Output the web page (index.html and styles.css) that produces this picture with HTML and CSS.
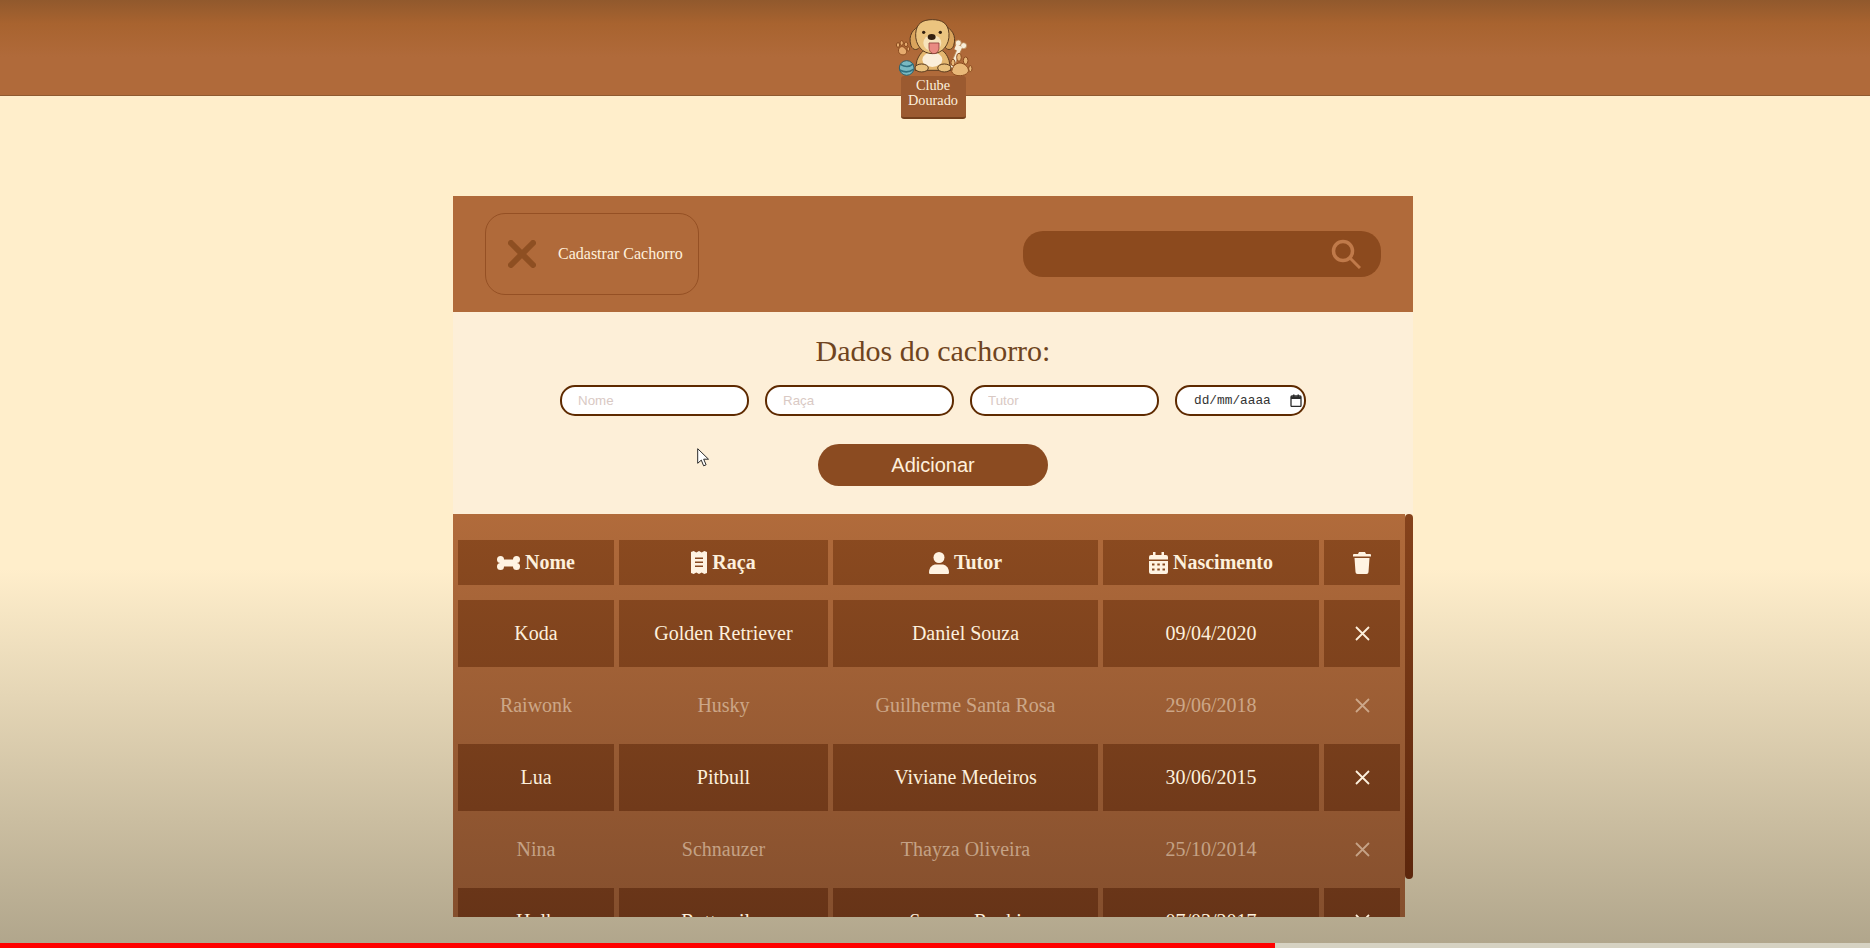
FILE: index.html
```html
<!DOCTYPE html>
<html lang="pt-BR">
<head>
<meta charset="UTF-8" />
<meta name="viewport" content="width=device-width, initial-scale=1" />
<title>Clube Dourado</title>
<link rel="stylesheet" href="styles.css">
</head>
<body>
  <header class="top-header">
    <div class="logo">
      <svg class="logo-art" viewBox="0 0 240 190" width="80" height="63.3">
        <!-- patinha pequena -->
        <g fill="#e6ab6e" stroke="#8a4a1e" stroke-width="3">
          <path d="M18 108c-6-14 6-22 13-18s13 12 8 20c-4 5-16 5-21-2z"/>
          <ellipse cx="15" cy="84" rx="5" ry="7"/>
          <ellipse cx="26" cy="78" rx="5" ry="7"/>
          <ellipse cx="39" cy="82" rx="5" ry="7"/>
          <ellipse cx="46" cy="96" rx="4" ry="6"/>
        </g>
        <!-- osso -->
        <g fill="#f8eeda" stroke="#b98a58" stroke-width="2.500">
          <path d="M170 150l26-62 11 5-26 62z"/>
          <circle cx="196" cy="78" r="9"/>
          <circle cx="212" cy="86" r="9"/>
          <path d="M190 82l18 8-8 14-16-7z" stroke="none"/>
        </g>
        <!-- corpo -->
        <path d="M72 130c8-20 18-30 28-32h40c12 2 22 14 28 32l6 30H66z" fill="#e3b66f" stroke="#5a3a1e" stroke-width="3"/>
        <ellipse cx="118" cy="128" rx="30" ry="22" fill="#fbeeda"/>
        <!-- orelhas e cabeca -->
        <path d="M80 28C62 34 44 54 54 86c5 15 22 16 28 0z" fill="#d9a45c" stroke="#5a3a1e" stroke-width="3"/>
        <path d="M156 28c18 6 36 26 26 58-5 15-22 16-28 0z" fill="#d9a45c" stroke="#5a3a1e" stroke-width="3"/>
        <path d="M68 50C70 18 90 8 118 8s48 10 50 42c2 34-20 60-50 60S66 84 68 50z" fill="#ebc47f" stroke="#5a3a1e" stroke-width="3"/>
        <ellipse cx="118" cy="78" rx="27" ry="24" fill="#f7e3bb"/>
        <circle cx="92" cy="46" r="5" fill="#33200f"/>
        <circle cx="142" cy="46" r="5" fill="#33200f"/>
        <ellipse cx="116" cy="60" rx="12" ry="9" fill="#33200f"/>
        <path d="M108 78h30v12c0 12-6 20-15 20s-15-8-15-20z" fill="#e98b82" stroke="#8e3f38" stroke-width="2.500"/>
        <!-- patas da frente -->
        <ellipse cx="86" cy="153" rx="20" ry="12" fill="#e9c07c" stroke="#5a3a1e" stroke-width="3"/>
        <ellipse cx="154" cy="153" rx="20" ry="12" fill="#e9c07c" stroke="#5a3a1e" stroke-width="3"/>
        <!-- bola -->
        <circle cx="41" cy="153" r="22" fill="#79b9c2" stroke="#2b5f6b" stroke-width="3"/>
        <path d="M23 143c14 8 26 8 38-2M20 159c14 8 28 8 41-2" fill="none" stroke="#2f7080" stroke-width="5"/>
        <!-- patinha grande -->
        <g fill="#e9b878" stroke="#8a4a1e" stroke-width="3">
          <path d="M176 163c4-22 22-30 36-22s20 22 8 30c-12 8-40 8-44-8z"/>
          <ellipse cx="180" cy="137" rx="6" ry="10"/>
          <ellipse cx="198" cy="121" rx="7" ry="12"/>
          <ellipse cx="218" cy="131" rx="7" ry="11"/>
          <ellipse cx="232" cy="155" rx="5" ry="9"/>
        </g>
      </svg>
      <div class="logo-sign">Clube<br>Dourado</div>
    </div>
  </header>

  <main class="painel">
    <div class="barra-topo">
      <button class="btn-cadastrar" type="button">
        <svg viewBox="0 0 28 28" width="28" height="28"><path d="M3 3l22 22M25 3L3 25" stroke="#8e4f22" stroke-width="6" stroke-linecap="round"/></svg>
        <span>Cadastrar Cachorro</span>
      </button>
      <div class="busca">
        <svg viewBox="0 0 30 30" width="30" height="30"><circle cx="12" cy="12" r="9.500" fill="none" stroke="#c07a4a" stroke-width="3.500"/><path d="M19 19l10 10" stroke="#c07a4a" stroke-width="3"/></svg>
      </div>
    </div>

    <form class="form-dados">
      <h2>Dados do cachorro:</h2>
      <div class="campos">
        <input type="text" placeholder="Nome" />
        <input type="text" placeholder="Raça" />
        <input type="text" placeholder="Tutor" />
        <div class="campo-data">
          <span>dd/mm/aaaa</span>
          <svg viewBox="0 0 12 13" width="12" height="13"><path d="M1 3a1 1 0 0 1 1-1h8a1 1 0 0 1 1 1v8.500a1 1 0 0 1-1 1H2a1 1 0 0 1-1-1z" fill="none" stroke="#2c2c2c" stroke-width="1.300"/><path d="M1 2.500h10v2.500H1zM3 .500h1.500V3H3zM7.500 .500H9V3H7.500z" fill="#2c2c2c"/></svg>
        </div>
      </div>
      <button class="btn-adicionar" type="button">Adicionar</button>
    </form>

    <div class="tabela-area">
      <div class="tabela-wrap">
        <table class="tabela">
          <colgroup>
            <col class="col-nome"><col class="col-raca"><col class="col-tutor"><col class="col-nasc"><col class="col-acao">
          </colgroup>
          <thead>
            <tr>
              <th>
                <div class="th-in">
                  <svg viewBox="0 0 23 14" width="23" height="14"><circle cx="3.500" cy="3.500" r="3.500"/><circle cx="3.500" cy="10.500" r="3.500"/><circle cx="19.500" cy="3.500" r="3.500"/><circle cx="19.500" cy="10.500" r="3.500"/><rect x="3" y="3.500" width="17" height="7"/></svg>
                  Nome
                </div>
              </th>
              <th>
                <div class="th-in">
                  <svg viewBox="0 0 16 23" width="16" height="23"><path fill-rule="evenodd" d="M0 1l2.700-1 2.600 1.500L8 0l2.700 1.500L13.300 0 16 1v21l-2.700 1-2.600-1.500L8 23l-2.700-1.500L2.700 23 0 22zM4 6.500v1.500h8V6.500zM4 10.500V12h8v-1.500zM4 14.500V16h8v-1.500z"/></svg>
                  Raça
                </div>
              </th>
              <th>
                <div class="th-in">
                  <svg viewBox="0 0 20 22" width="20" height="22"><circle cx="10" cy="5.500" r="5.500"/><path d="M0 20.500C0 15 4 12.500 7 12.500h6c3 0 7 2.500 7 8 0 1-.7 1.500-1.500 1.500h-17C.7 22 0 21.500 0 20.500z"/></svg>
                  Tutor
                </div>
              </th>
              <th>
                <div class="th-in">
                  <svg viewBox="0 0 19 22" width="19" height="22"><path d="M4 0h2.500v3h6V0H15v3h2a2 2 0 0 1 2 2v2.500H0V5a2 2 0 0 1 2-2h2z"/><path fill-rule="evenodd" d="M0 9h19v11a2 2 0 0 1-2 2H2a2 2 0 0 1-2-2zM3 11.500v2h2.500v-2zM8.300 11.500v2h2.500v-2zM13.500 11.500v2H16v-2zM3 16.500v2h2.500v-2zM8.300 16.500v2h2.500v-2zM13.500 16.500v2H16v-2z"/></svg>
                  Nascimento
                </div>
              </th>
              <th>
                <div class="th-in">
                  <svg viewBox="0 0 18 22" width="18" height="22"><path d="M6 0h6l1 2h4a1 1 0 0 1 1 1v1.500H0V3a1 1 0 0 1 1-1h4z"/><path d="M1.500 6h15l-1 14a2 2 0 0 1-2 2h-9a2 2 0 0 1-2-2z"/></svg>
                </div>
              </th>
            </tr>
          </thead>
          <tbody>
            <tr>
              <td>Koda</td><td>Golden Retriever</td><td>Daniel Souza</td><td>09/04/2020</td>
              <td><svg class="x" viewBox="0 0 15 15" width="15" height="15"><path d="M1 1l13 13M14 1L1 14"/></svg></td>
            </tr>
            <tr class="inativo">
              <td>Raiwonk</td><td>Husky</td><td>Guilherme Santa Rosa</td><td>29/06/2018</td>
              <td><svg class="x" viewBox="0 0 15 15" width="15" height="15"><path d="M1 1l13 13M14 1L1 14"/></svg></td>
            </tr>
            <tr>
              <td>Lua</td><td>Pitbull</td><td>Viviane Medeiros</td><td>30/06/2015</td>
              <td><svg class="x" viewBox="0 0 15 15" width="15" height="15"><path d="M1 1l13 13M14 1L1 14"/></svg></td>
            </tr>
            <tr class="inativo">
              <td>Nina</td><td>Schnauzer</td><td>Thayza Oliveira</td><td>25/10/2014</td>
              <td><svg class="x" viewBox="0 0 15 15" width="15" height="15"><path d="M1 1l13 13M14 1L1 14"/></svg></td>
            </tr>
            <tr>
              <td>Hulk</td><td>Rottweiler</td><td>Samara Rochi</td><td>07/03/2017</td>
              <td><svg class="x" viewBox="0 0 15 15" width="15" height="15"><path d="M1 1l13 13M14 1L1 14"/></svg></td>
            </tr>
          </tbody>
        </table>
      </div>
      <div class="rolagem"></div>
    </div>
  </main>

  <svg class="cursor" viewBox="0 0 12 19" width="12" height="19"><path d="M.7.7v14.600l3.600-3.200 2.300 5.700 2.500-1-2.400-5.600h4.800z" fill="#fff" stroke="#2a2a2a" stroke-width="1"/></svg>

  <div class="progresso"><div class="progresso-feito"></div></div>
</body>
</html>
```

FILE: styles.css
```css
* {
  margin: 0; padding: 0; box-sizing: border-box;
}
html, body {
  height: 100%;
}
body {
  font-family: "Liberation Serif", "Times New Roman", serif;
  background: linear-gradient(#ffeecb 60%, #b0a58b 100%);
  overflow: hidden;
}
.top-header {
  position: relative;
  height: 96px;
  background: linear-gradient(#91592d 0, #a8632f 25%, #b06a3a 60%);
  border-bottom: 1px solid #8f5a30;
}
.logo {
  position: absolute;
  top: 17px;
  left: 893px;
  width: 80px;
  display: flex;
  flex-direction: column;
  align-items: center;
}
.logo-art {
  display: block;
}
.logo-sign {
  position: relative;
  width: 65px;
  height: 43px;
  margin-top: -4px;
  padding-top: 2px;
  background: #9b5a30;
  border-bottom: 2px solid #74401c;
  border-radius: 3px;
  color: #fdf0dc;
  font-size: 14.300px;
  line-height: 14.500px;
  text-align: center;
}
/* painel central */
.painel {
  width: 960px;
  margin: 100px 0 0 453px;
}
.barra-topo {
  height: 116px;
  padding: 0 32px;
  display: flex;
  align-items: center;
  justify-content: space-between;
  background: #b06a3a;
}
.btn-cadastrar {
  width: 214px;
  height: 82px;
  padding-left: 22px;
  display: flex;
  align-items: center;
  gap: 22px;
  background: transparent;
  border: 1px solid #955024;
  border-radius: 20px;
  color: #fff0dc;
  font-family: inherit;
  font-size: 16px;
  cursor: pointer;
}
.busca {
  width: 358px;
  height: 46px;
  padding-right: 20px;
  display: flex;
  align-items: center;
  justify-content: flex-end;
  background: #8c4a1e;
  border-radius: 20px;
}
.form-dados {
  height: 202px;
  padding-top: 22px;
  display: flex;
  flex-direction: column;
  align-items: center;
  background: #fdefd8;
}
.form-dados h2 {
  font-size: 30px;
  font-weight: normal;
  color: #6f4420;
}
.campos {
  margin-top: 17px;
  display: flex;
  gap: 16px;
}
.campos input,
.campo-data {
  height: 31px;
  background: #fff;
  border: 2px solid #5e2a00;
  border-radius: 15px;
}
.campos input {
  width: 189px;
  padding: 0 16px;
  font-family: "Liberation Sans", Arial, sans-serif;
  font-size: 13.330px;
}
.campos input::placeholder {
  color: #d9c9c4;
}
.campo-data {
  width: 131px;
  padding: 0 2px 0 17px;
  display: flex;
  align-items: center;
  justify-content: space-between;
  font-family: "Liberation Mono", "Courier New", monospace;
  font-size: 12.800px;
  color: #333;
}
.btn-adicionar {
  width: 230px;
  height: 42px;
  margin-top: 28px;
  background: #8b4b21;
  border: none;
  border-radius: 21px;
  color: #fff0dc;
  font-family: "Liberation Sans", Arial, sans-serif;
  font-size: 20px;
  cursor: pointer;
}
/* tabela */
.tabela-area {
  position: relative;
}
.tabela-wrap {
  width: 952px;
  height: 403px;
  overflow: hidden;
}
.rolagem {
  position: absolute;
  top: 0;
  right: 0;
  width: 8px;
  height: 365px;
  background: linear-gradient(#86431c, #5c260c);
  border-radius: 4px;
}
.tabela {
  width: 952px;
  padding-top: 21px;
  table-layout: fixed;
  border-collapse: separate;
  border-spacing: 5px;
  background: linear-gradient(#b16b3b, #804c2c);
  color: #fdf0dc;
  font-size: 20px;
  text-align: center;
}
.col-nome { width: 156px; }
.col-raca { width: 209px; }
.col-tutor { width: 265px; }
.col-nasc { width: 216px; }
.col-acao { width: 76px; }
.tabela th,
.tabela td {
  background: linear-gradient(#bc692b, #643217) fixed;
  vertical-align: middle;
}
.tabela th {
  height: 45px;
  font-size: 20px;
}
.th-in {
  display: flex;
  align-items: center;
  justify-content: center;
  gap: 5px;
}
.th-in svg {
  fill: #fff3e2;
}
.tabela td {
  height: 67px;
}
.tabela tbody::before {
  content: "";
  display: table-row;
  height: 5px;
}
.tabela .inativo td {
  background: transparent;
  color: rgba(253,240,220,0.5);
}
.x {
  display: block;
  margin: 0 auto;
  fill: none;
  stroke: currentColor;
  stroke-width: 1.800;
}
/* itens por cima da pagina */
.cursor {
  position: fixed;
  left: 697px;
  top: 448px;
}
.progresso {
  position: fixed;
  left: 0; right: 0; bottom: 0;
  height: 5px;
  background: #d6d2c2;
}
.progresso-feito {
  width: 1275px;
  height: 100%;
  background: #f00;
}
```
